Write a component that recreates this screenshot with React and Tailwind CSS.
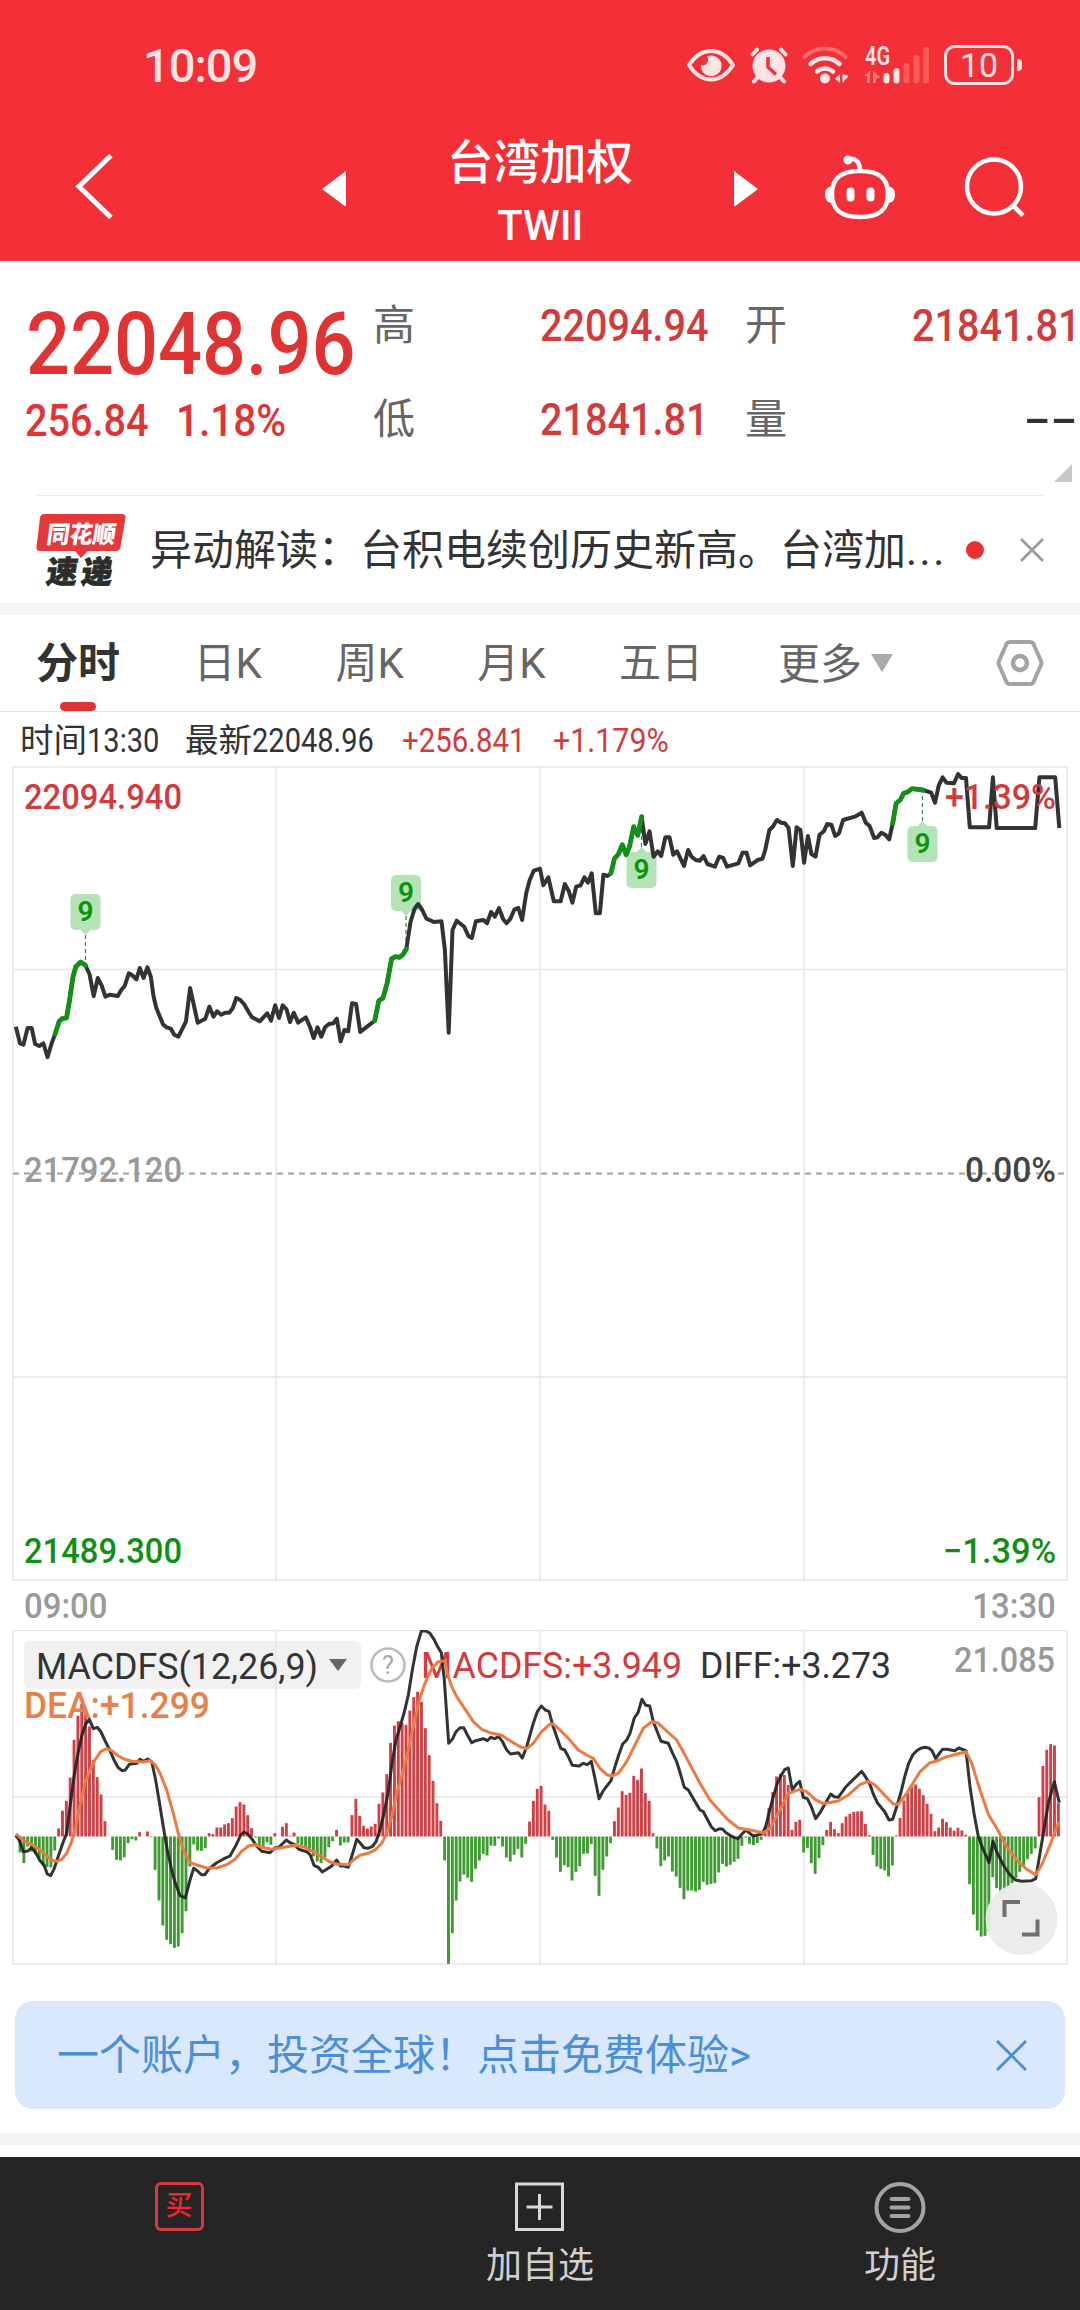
import React from "react";
import clsx from "clsx";

const tabs = ["分时", "日K", "周K", "月K", "五日"];

const quotes = [
  { label: "高", value: "22094.94" },
  { label: "开", value: "21841.81" },
  { label: "低", value: "21841.81" },
  { label: "量", value: null },
];

// price samples, split at the middle of the session
const SAMPLE_X = 2.9037;
const SAMPLE_Y = 3;
const morning = [
  [46, 1280], [58, 1330], [68, 1334], [80, 1284], [92, 1284], [102, 1332], [114, 1338], [126, 1330], [138, 1372], [150, 1330],
  [160, 1302], [172, 1264], [180, 1256], [193, 1254], [202, 1200], [212, 1130], [220, 1100], [234, 1086], [248, 1096],
  [260, 1122], [272, 1188], [284, 1134], [295, 1156], [306, 1190], [318, 1184], [342, 1188], [352, 1170], [362, 1158],
  [374, 1120], [384, 1126], [396, 1138], [406, 1104], [417, 1134], [428, 1102], [438, 1130], [446, 1190], [454, 1225],
  [474, 1274], [484, 1282], [496, 1286], [506, 1304], [518, 1310], [540, 1264], [552, 1164], [564, 1220], [574, 1268],
  [596, 1256], [608, 1220], [620, 1250], [630, 1234], [642, 1244], [654, 1238], [666, 1238], [676, 1224], [686, 1194],
  [698, 1200], [710, 1214], [722, 1236], [732, 1252], [754, 1264], [776, 1240], [787, 1262], [799, 1216], [810, 1254],
  [821, 1216], [832, 1228], [842, 1266], [853, 1238], [866, 1268], [888, 1252], [900, 1280], [911, 1314], [922, 1282],
  [933, 1310], [944, 1282], [955, 1272], [968, 1270], [978, 1256], [989, 1324], [1000, 1290], [1011, 1294], [1022, 1210],
  [1034, 1212], [1046, 1296], [1066, 1280], [1088, 1262], [1100, 1202], [1112, 1194], [1124, 1150], [1137, 1076],
  [1148, 1070], [1160, 1072], [1170, 1064], [1180, 1046], [1192, 966], [1204, 926], [1214, 912], [1226, 930], [1238, 956],
  [1260, 966], [1282, 964], [1292, 1050], [1303, 1298], [1314, 990], [1326, 962], [1348, 980], [1360, 1008], [1370, 1014],
  [1382, 964], [1404, 960], [1414, 970], [1426, 936], [1437, 950], [1449, 924], [1461, 958], [1471, 970], [1482, 956],
  [1494, 928], [1505, 924], [1516, 960], [1528, 880], [1538, 840], [1550, 812], [1562, 808],
];
const afternoon = [
  [0, 806], [10, 856], [24, 832], [40, 904], [60, 904], [72, 852], [83, 872], [94, 908], [105, 860], [118, 856], [129, 832],
  [139, 848], [150, 820], [162, 940], [174, 940], [184, 824], [196, 828], [206, 820], [216, 776], [228, 762], [239, 734],
  [250, 764], [260, 740], [272, 680], [284, 706], [295, 650], [306, 732], [318, 694], [330, 770], [342, 754], [352, 768],
  [364, 712], [376, 712], [387, 764], [398, 754], [418, 798], [430, 750], [440, 770], [452, 780], [464, 782], [475, 768],
  [486, 792], [508, 800], [520, 770], [532, 774], [543, 800], [576, 790], [588, 758], [600, 758], [610, 796], [632, 780],
  [646, 776], [654, 750], [666, 690], [676, 680], [688, 660], [700, 668], [711, 670], [722, 684], [734, 798], [745, 682],
  [756, 690], [767, 788], [778, 708], [788, 762], [800, 770], [812, 704], [824, 694], [834, 672], [846, 674], [857, 708],
  [868, 700], [880, 660], [914, 650], [934, 638], [946, 668], [957, 678], [970, 714], [980, 712], [991, 698], [1002, 704],
  [1014, 718], [1024, 670], [1034, 610], [1046, 600], [1056, 580], [1068, 576], [1080, 566], [1112, 570], [1136, 578],
  [1147, 608], [1158, 556], [1169, 532], [1180, 548], [1202, 550], [1214, 522], [1224, 534], [1237, 534], [1248, 682],
  [1304, 682], [1315, 532], [1326, 684], [1438, 684], [1450, 532], [1496, 532], [1508, 684],
];
const price = [
  ...morning.map(([x, y]) => [x / SAMPLE_X, y / SAMPLE_Y - 166]),
  ...afternoon.map(([x, y]) => [540 + x / SAMPLE_X, y / SAMPLE_Y - 166]),
];

// stretches of nine rising minutes, [from x, to x]
const runs = [
  [55, 86],
  [374, 407],
  [610, 642],
  [892, 924],
];

const markers = [
  { x: 85.5, top: 128, up: false, end: 197 },
  { x: 406, top: 109, up: false, end: 182 },
  { x: 641.5, top: 86, up: true, end: 52 },
  { x: 922.5, top: 60, up: true, end: 25 },
];

// one value per minute
const bars = [
  -4, -48, -80, -30, -45, -52, -64, -88, -92, -93, -42, 24, 77, 107, 177, 290, 362, 398, 385, 330, 230, 178, 126, 46, 0,
  -40, -70, -72, -62, -20, -8, -12, 13, 0, 15, -2, -100, -192, -267, -310, -323, -334, -330, -290, -224, -90, -24, -42,
  -43, -35, 10, 7, 27, 27, 36, 40, 55, 90, 103, 96, 64, 25, -3, -36, -30, -18, -25, 10, 0, 29, 40, 2, 12, -22, -26, -34,
  -45, -60, -75, -80, -62, -32, -14, 20, -27, -18, -18, 64, 113, 62, 32, 24, 30, 38, 98, 132, 187, 281, 333, 346, 340,
  335, 378, 418, 434, 404, 325, 244, 167, 100, 47, -72, -382, -290, -192, -135, -114, -124, -136, -97, -72, -52, -57,
  -27, -28, -6, -30, -63, -75, -55, -37, -63, -22, 45, 107, 143, 152, 96, 77, -10, -63, -106, -86, -92, -132, -106, -89,
  -52, -51, -22, -118, -178, -100, -60, -20, 46, 87, 136, 125, 131, 182, 170, 204, 130, 107, 10, -36, -89, -72, -60,
  -105, -120, -154, -188, -162, -162, -165, -160, -136, -145, -142, -140, -108, -82, -90, -85, -76, -67, -28, -3, -22,
  -26, -20, -10, 30, 85, 133, 180, 188, 185, 155, 20, 44, 50, -48, -34, -80, -112, -65, -26, 20, 44, 22, 10, 40, 60, 68,
  74, 75, 76, 38, 4, -55, -90, -97, -102, -120, -87, 3, 56, 108, 130, 150, 156, 143, 124, 98, 68, 16, 27, 53, 43, 27, 17,
  26, 18, 5, -143, -234, -282, -300, -298, -284, -122, -155, -168, -170, -158, -140, -125, -106, -88, -68, -52, -36, 118,
  212, 260, 277, 273, 100,
];

const diff = [
  [
    [48, 645], [60, 665], [70, 695], [84, 693], [95, 682], [108, 700], [120, 722], [132, 735], [142, 762], [152, 767],
    [163, 745], [176, 705], [190, 665], [200, 640], [210, 560], [222, 470], [234, 400], [246, 345], [257, 312], [268, 298],
    [280, 326], [292, 322], [303, 336], [315, 362], [330, 392], [342, 420], [354, 442], [366, 452], [376, 450], [388, 433],
    [410, 430], [420, 418], [431, 424], [443, 417], [455, 425], [466, 475], [478, 545], [490, 620], [502, 690], [514, 745],
    [526, 790], [540, 826], [556, 834], [570, 780], [581, 745], [592, 752], [604, 764], [615, 764], [627, 746], [650, 728],
    [672, 716], [690, 708], [708, 676], [722, 645], [732, 636], [743, 642], [755, 656], [770, 678], [785, 694], [810, 698],
    [824, 684], [836, 682], [859, 660], [870, 668], [884, 674], [896, 688], [920, 695], [931, 705], [942, 736], [955, 742],
    [967, 756], [980, 748], [995, 738], [1010, 720], [1021, 738], [1033, 738], [1045, 742], [1058, 700], [1070, 658],
  ],
  [
    [0, 668], [12, 683], [24, 685], [36, 680], [48, 665], [60, 630], [72, 580], [84, 520], [96, 430], [108, 360], [120, 320],
    [132, 280], [145, 225], [157, 150], [170, 80], [184, 34], [196, 32], [210, 40], [222, 58], [232, 78], [244, 98],
    [253, 180], [266, 370], [278, 356], [288, 335], [300, 323], [311, 323], [322, 344], [335, 368], [347, 362], [370, 356],
    [382, 362], [392, 352], [404, 356], [416, 350], [427, 364], [440, 390], [452, 402], [475, 398], [487, 414], [500, 380],
    [510, 345], [520, 310], [532, 275], [544, 258], [556, 270], [567, 274], [578, 315], [590, 350], [602, 385], [614, 390],
    [625, 410], [637, 436], [658, 438], [670, 430], [682, 434], [694, 424], [706, 480], [717, 536], [730, 512], [753, 482],
    [765, 440], [776, 405], [788, 372], [800, 360], [810, 340], [823, 294], [834, 278], [846, 238], [857, 256], [869, 258],
    [880, 305], [892, 335], [903, 364], [925, 370], [937, 398], [950, 425], [961, 460], [973, 502], [985, 510], [1008, 550],
    [1020, 570], [1030, 575], [1042, 598], [1054, 620], [1066, 632],
  ],
  [
    [0, 626], [8, 628], [18, 638], [30, 646], [42, 652], [54, 656], [66, 642], [78, 630], [90, 640], [100, 648], [125, 642],
    [136, 625], [148, 575], [160, 530], [172, 490], [184, 465], [195, 448], [205, 444], [217, 510], [228, 494], [239, 484],
    [250, 532], [262, 536], [274, 560], [287, 596], [300, 578], [322, 540], [332, 522], [343, 530], [355, 532], [378, 500],
    [402, 476], [425, 454], [436, 470], [448, 488], [460, 522], [472, 548], [494, 575], [507, 600], [518, 598], [530, 560],
    [542, 520], [554, 470], [566, 430], [578, 405], [590, 392], [602, 385], [615, 382], [626, 384], [636, 392], [647, 416],
    [658, 400], [668, 388], [680, 388], [704, 392], [716, 384], [738, 392], [750, 500], [762, 580], [774, 645], [786, 680],
    [807, 728], [819, 664], [832, 700], [850, 735], [870, 765], [886, 780], [905, 784], [935, 782], [947, 776], [960, 700],
    [975, 610], [985, 550], [1003, 485], [1018, 548],
  ],
];

const dea = [
  [
    [48, 642], [60, 652], [75, 664], [100, 676], [120, 690], [140, 708], [160, 722], [172, 724], [185, 718], [200, 700],
    [215, 665], [228, 615], [240, 555], [255, 490], [270, 450], [285, 420], [302, 395], [320, 386], [335, 392], [355, 408],
    [375, 418], [395, 424], [430, 426], [450, 422], [465, 434], [480, 460], [500, 510], [520, 580], [535, 640], [550, 690],
    [570, 728], [590, 735], [620, 744], [650, 744], [680, 734], [705, 718], [725, 694], [745, 678], [765, 674], [785, 682],
    [815, 688], [840, 684], [885, 676], [915, 682], [940, 695], [965, 710], [990, 726], [1010, 732], [1045, 734], [1060, 720],
  ],
  [
    [0, 706], [24, 700], [48, 688], [65, 670], [80, 640], [95, 590], [110, 520], [130, 450], [145, 390], [160, 320],
    [178, 240], [195, 190], [215, 145], [235, 125], [255, 122], [262, 160], [275, 200], [290, 230], [320, 275], [340, 305],
    [365, 328], [390, 338], [425, 346], [450, 362], [480, 380], [500, 386], [520, 370], [545, 335], [570, 312], [580, 312],
    [600, 330], [625, 355], [655, 390], [680, 405], [700, 415], [720, 445], [740, 464], [755, 468], [775, 460], [800, 425],
    [825, 375], [850, 325], [875, 305], [895, 310], [930, 342], [950, 360], [980, 415], [1020, 490], [1050, 540],
  ],
  [
    [0, 574], [25, 600], [55, 624], [90, 630], [130, 638], [150, 625], [180, 570], [205, 520], [240, 508], [260, 515],
    [285, 538], [310, 551], [355, 543], [385, 525], [420, 494], [445, 484], [465, 495], [500, 532], [520, 552], [535, 553],
    [560, 520], [600, 455], [630, 428], [650, 423], [680, 410], [738, 395], [755, 430], [780, 510], [806, 585], [830, 625],
    [860, 680], [890, 720], [920, 748], [947, 764], [965, 735], [990, 675], [1016, 605],
  ],
];

const toPoints = (list) => list.map(([x, y]) => `${x.toFixed(1)},${y.toFixed(1)}`).join(" ");

const joinParts = (parts) =>
  parts.flatMap((part, i) => part.map(([x, y]) => [i * 360 + x / 3, y / 3 - 10]));

function StatusIcons() {
  return (
    <div className="flex items-center text-[#ffe3e4]">
      <svg className="w-[48px] h-[40px] mr-[14px]" viewBox="0 0 48 40" fill="none">
        <path d="M2 20C9 9 16 6 24 6s15 3 22 14c-7 11-14 14.500-22 14.500S9 31 2 20z" stroke="currentColor" strokeWidth="4" strokeLinejoin="round" />
        <path d="M20 11.500a5.500 5.500 0 0 1-6 8.500A10.300 10.300 0 1 0 20 11.500z" fill="currentColor" />
      </svg>
      <svg className="w-[40px] h-[40px] mr-[13px]" viewBox="0 0 40 40" fill="none">
        <g stroke="currentColor" strokeWidth="4" strokeLinecap="round">
          <path d="M3.500 9.500l4.500-5M36.500 9.500l-4.500-5M9 32l-4 4.500M31 32l4 4.500" />
        </g>
        <circle cx="20" cy="21" r="16.500" fill="currentColor" />
        <path d="M19 12v10l8 7.500" stroke="#f32f38" strokeWidth="3.500" />
      </svg>
      <svg className="w-[48px] h-[40px] mr-[14px]" viewBox="0 0 48 40" fill="none" strokeLinecap="round" strokeWidth="4">
        <path d="M2.500 12a29 29 0 0 1 41 0" stroke="#ff6a68" />
        <path d="M8.500 19a21 21 0 0 1 29 0M15 26.500a12 12 0 0 1 16 0" stroke="currentColor" strokeWidth="4.500" />
        <circle cx="23" cy="33.500" r="5" fill="currentColor" />
        <path d="M38 29v9l-5-4.500zM40.500 29v9l6-7z" fill="currentColor" />
      </svg>
      <svg className="w-[66px] h-[40px] mr-[14px] overflow-visible" viewBox="0 0 66 40">
        <text x="1" y="20" fontSize="25" fontWeight="600" fill="currentColor" textLength="25" lengthAdjust="spacingAndGlyphs">4G</text>
        <path d="M6 26v12h-3v-7H0zM9 26l7 6-4 2v4H9z" fill="#ff7c7c" />
        <rect x="19.500" y="28" width="6" height="10.500" rx="3" fill="currentColor" />
        <rect x="29.500" y="23" width="6" height="15.500" rx="3" fill="currentColor" />
        <rect x="39.500" y="18" width="6" height="20.500" rx="3" fill="#ff5a58" />
        <rect x="49.500" y="10" width="6" height="28.500" rx="3" fill="#ff5a58" />
        <rect x="59" y="2" width="6" height="36.500" rx="3" fill="#ff5a58" />
      </svg>
      <div className="w-[70px] h-[40px] rounded-[11px] border-[3px] border-current flex items-center justify-center text-[34px] leading-none">
        10
      </div>
      <div className="ml-[3px] w-[5px] h-[12px] rounded-r bg-current" />
    </div>
  );
}

function Header() {
  return (
    <header className="h-[261px] bg-[#f32f38] text-white">
      <div className="h-[130px] pl-[143px] pr-[58px] flex items-center justify-between">
        <span className="text-[47px] tracking-[-1px] leading-none font-medium text-[#ffe3e4]">10:09</span>
        <StatusIcons />
      </div>
      <div className="h-[116px] pl-[74px] pr-[53px] flex items-center">
        <svg className="w-[42px] h-[70px]" viewBox="0 0 42 70" fill="none">
          <path d="M37 2.500L5 33.500L37 64.500" stroke="currentColor" strokeWidth="5" />
        </svg>
        <svg className="w-[24px] h-[36px] ml-[206px]" viewBox="0 0 24 36">
          <path d="M24 1v36L0 19z" fill="currentColor" />
        </svg>
        <div className="w-[388px] pt-[12px] flex flex-col items-center">
          <h1 className="text-[46.500px] leading-[62px] font-medium">台湾加权</h1>
          <span className="text-[43px] leading-[62px] font-medium origin-center scale-x-[0.97]">TWII</span>
        </div>
        <svg className="w-[24px] h-[36px]" viewBox="0 0 24 36">
          <path d="M0 1v36L24 19z" fill="currentColor" />
        </svg>
        <svg className="w-[72px] h-[68px] ml-[66px]" viewBox="0 0 72 68" fill="none" stroke="currentColor" strokeWidth="4.500">
          <path d="M24 5c7-1 11.500 2 12 10.500" />
          <circle cx="24" cy="6" r="4.500" fill="currentColor" stroke="none" />
          <path d="M36 17c20 0 28 8 28 23s-8 23-28 23S8 55 8 40s8-23 28-23z" />
          <path d="M8 35c-3 0-4.500 2-4.500 5.500s1.500 6 5 6M64 35c3 0 4.500 2 4.500 5.500s-1.500 6-5 6" strokeWidth="5" />
          <path d="M26.500 37.500v6M46.500 37.500v6" strokeWidth="8" strokeLinecap="round" />
        </svg>
        <svg className="w-[64px] h-[66px] ml-[67px]" viewBox="0 0 64 66" fill="none" stroke="currentColor" strokeWidth="4.500">
          <circle cx="31" cy="31.500" r="27" />
          <path d="M50 50.500l10 10" />
        </svg>
      </div>
    </header>
  );
}

function Quote() {
  return (
    <section className="h-[234px] flex">
      <div className="w-[373px] pl-[26px] pt-[38px] text-[#e03434] font-medium">
        <div className="text-[88px] leading-[90px] h-[90px] origin-left scale-x-[0.88] whitespace-nowrap">22048.96</div>
        <div className="flex text-[45px] leading-[50px] pt-[7px]">
          <span className="w-[151px] -ml-px origin-left scale-x-[0.88]">256.84</span>
          <span className="origin-left scale-x-90">1.18%</span>
        </div>
      </div>
      <div className="flex-1 grid grid-cols-[372px_336px] grid-rows-[94px_94px] content-start pt-[17px]">
        {quotes.map((q, i) => (
          <div key={q.label} className={clsx("flex items-center justify-between", i % 2 === 0 && "pr-[36px]")}>
            <span className="text-[42px] text-[#666]">{q.label}</span>
            {q.value ? (
              <span className="text-[45px] text-[#d23a3c] font-medium origin-right scale-x-[0.88] pt-px">{q.value}</span>
            ) : (
              <span className="text-[45px] text-[#333] font-medium origin-right scale-x-[1.75] mr-[3px]">--</span>
            )}
          </div>
        ))}
        <div className="col-span-2 flex justify-end pr-[9px] -mt-[2px]">
          <svg className="w-[18px] h-[18px]" viewBox="0 0 18 18">
            <path d="M18 0v18H0z" fill="#c8c8c8" />
          </svg>
        </div>
      </div>
    </section>
  );
}

function NewsLogo() {
  return (
    <svg className="w-[90px] h-[74px] overflow-visible" viewBox="0 0 90 74">
      <path d="M8 1h78q4 0 3.500 4l-5 29q-.6 4-5 4H52l-7 7-6-7H4q-4 0-3.500-4L4 5q.6-4 4-4z" fill="#e5393c" />
      <g transform="skewX(-8)" fontWeight="900">
        <text x="14" y="30" fontSize="24" fill="#fff" textLength="69" lengthAdjust="spacingAndGlyphs">同花顺</text>
        <g fill="#2c2c2c" stroke="#2c2c2c" strokeWidth="0.800" fontSize="31">
          <text x="19" y="70">速</text>
          <text x="54" y="70">递</text>
        </g>
      </g>
    </svg>
  );
}

function NewsRow() {
  return (
    <section className="mx-[36px] h-[108px] border-t border-[#ebebeb] flex items-center">
      <NewsLogo />
      <p className="ml-[24px] mt-[2px] w-[802px] text-[42px] leading-none text-[#333] whitespace-nowrap">
        异动解读：台积电续创历史新高。台湾加<span className="tracking-[2.500px]">...</span>
      </p>
      <span className="ml-[14px] size-[18px] rounded-full bg-[#ea2f30]" />
      <svg className="w-[24px] h-[24px] ml-auto" viewBox="0 0 24 24" stroke="#999" strokeWidth="2.500">
        <path d="M1 1l22 22M23 1L1 23" />
      </svg>
    </section>
  );
}

function Tabs() {
  return (
    <nav className="h-[97px] pl-[36px] pr-[35px] border-b border-[#e4e4e4] flex items-center text-[42px] text-[#666]">
      <div className="flex gap-[73.500px] pt-[2px]">
        {tabs.map((tab, i) => (
          <button key={tab} className={clsx("relative leading-[60px]", i === 0 && "font-bold text-[#333]")}>
            {tab}
            {i === 0 && (
              <span className="absolute left-1/2 -translate-x-1/2 top-[68px] w-[36px] h-[9px] rounded-full bg-[#dc3535]" />
            )}
          </button>
        ))}
      </div>
      <button className="ml-[75px] pt-[2px] flex items-center gap-[9px]">
        更多
        <svg className="w-[22px] h-[18px] -mt-[2px]" viewBox="0 0 22 18">
          <path d="M0 0h22L11 18z" fill="#aaa" />
        </svg>
      </button>
      <svg className="w-[50px] h-[48px] ml-auto" viewBox="0 0 50 48" fill="none" stroke="#a3a3a3">
        <path d="M15 3h20q2.500 0 3.500 2l7.500 17q1 2 0 4l-7.500 17q-1 2-3.500 2H15q-2.500 0-3.500-2L4 26q-1-2 0-4l7.500-17q1-2 3.500-2z" strokeWidth="4" />
        <circle cx="25" cy="24" r="7" strokeWidth="4.500" />
      </svg>
    </nav>
  );
}

function InfoRow() {
  return (
    <div className="h-[54px] pl-[20px] pt-[3px] flex items-center text-[33.500px] leading-none text-[#333]">
      <span>时间</span>
      <span className="w-[98px] text-[33px] origin-left scale-x-[0.88]">13:30</span>
      <span>最新</span>
      <span className="w-[150px] text-[33px] origin-left scale-x-[0.88]">22048.96</span>
      <span className="w-[151px] text-[33px] text-[#d23a3c] origin-left scale-x-[0.89]">+256.841</span>
      <span className="text-[33px] text-[#d23a3c] origin-left scale-x-[0.92]">+1.179%</span>
    </div>
  );
}

function Marker({ x, top, up, end }) {
  const tip = up ? top - 5 : top + 41;
  const base = up ? top + 1 : top + 35;
  return (
    <g>
      <line x1={x} x2={x} y1={tip} y2={end} stroke="#3f7f45" strokeWidth="1.200" strokeDasharray="4 3" />
      <rect x={x - 15} y={top} width="30" height="36" rx="5" fill="#b4e3b5" />
      <path d={`M${x - 6} ${base}L${x} ${tip}L${x + 6} ${base}z`} fill="#b4e3b5" />
      <text x={x} y={top + 27} fontSize="28" fontWeight="600" fill="#0d930d" textAnchor="middle">9</text>
    </g>
  );
}

function ChartText({ x, y, width, color, size = 35, weight = 400, children }) {
  return (
    <text x={x} y={y} fontSize={size} fontWeight={weight} fill={color} textLength={width} lengthAdjust="spacingAndGlyphs">
      {children}
    </text>
  );
}

function PriceChart() {
  return (
    <svg className="block w-[1080px] h-[815px]" viewBox="0 0 1080 815" fill="none">
      <g stroke="#e6e6e6" strokeWidth="1.500">
        <rect x="13" y="1" width="1054" height="813" />
        <path d="M276 1v813M540 1v813M804 1v813M13 203.500h1054M13 611h1054" />
      </g>
      <path d="M13 407.500h1054" stroke="#a0a0a0" strokeWidth="2" strokeDasharray="6 5" />
      {markers.map((m) => (
        <Marker key={m.x} {...m} />
      ))}
      <g strokeWidth="4" strokeLinejoin="round">
        <polyline points={toPoints(price)} stroke="#333" />
        {runs.map(([from, to]) => (
          <polyline
            key={from}
            points={toPoints(price.filter(([x]) => x >= from && x <= to))}
            stroke="#12901a"
            strokeWidth="4.800"
            strokeLinecap="round"
          />
        ))}
      </g>
      <ChartText x="24" y="43" width="158" weight={500} color="#d23a3c">22094.940</ChartText>
      <ChartText x="945" y="43" width="111" weight={500} color="#d23a3c">+1.39%</ChartText>
      <ChartText x="24" y="416" width="158" weight={500} color="#999">21792.120</ChartText>
      <ChartText x="965" y="416" width="91" weight={500} color="#444">0.00%</ChartText>
      <ChartText x="24" y="797" width="158" weight={500} color="#0f8f14">21489.300</ChartText>
      <ChartText x="943" y="797" width="113" weight={500} color="#0f8f14">−1.39%</ChartText>
    </svg>
  );
}

function MacdChart() {
  return (
    <svg className="block w-[1080px] h-[336px]" viewBox="0 20 1080 336" fill="none">
      <g transform="translate(0 20)">
        <rect x="24" y="11" width="337" height="48" rx="6" fill="#f1f1f1" />
        <g stroke="#e6e6e6" strokeWidth="1.500">
          <rect x="13" y="0.500" width="1054" height="333.500" />
          <path d="M276 0v334M540 0v334M804 0v334M13 167h1054" />
        </g>
        {bars.map((v, i) => (
          <rect
            key={i}
            x={16.2 + i * 3.86 - 1.5}
            y={v > 0 ? 206.5 - v / 3 : 206.5}
            width="2.900"
            height={Math.abs(v) / 3}
            fill={v > 0 ? "#cf4147" : "#3f9a32"}
          />
        ))}
        <ChartText x="36" y="49" width="282" size={37} color="#333">MACDFS(12,26,9)</ChartText>
        <path d="M329 29h18l-9 12z" fill="#666" />
        <circle cx="388" cy="35" r="16.500" stroke="#bbb" strokeWidth="2.500" />
        <text x="388" y="44" fontSize="25" fill="#aaa" textAnchor="middle">?</text>
        <ChartText x="421" y="48" width="261" size={37} color="#d23a3c">MACDFS:+3.949</ChartText>
        <ChartText x="700" y="48" width="191" size={37} color="#333">DIFF:+3.273</ChartText>
        <ChartText x="954" y="42" width="101" weight={500} color="#999">21.085</ChartText>
        <ChartText x="24" y="88" width="186" size={37} weight={500} color="#e8804a">DEA:+1.299</ChartText>
        <g strokeWidth="3" strokeLinejoin="round">
          <polyline points={toPoints(joinParts(diff))} stroke="#222" strokeOpacity="0.92" />
          <polyline points={toPoints(joinParts(dea))} stroke="#ee7a42" />
        </g>
        <circle cx="1021.500" cy="289" r="36" fill="#ebebeb" fillOpacity="0.93" />
        <path d="M1020 272h-15.500v15M1022 304.500h15.500v-15" stroke="#707070" strokeWidth="4" />
      </g>
    </svg>
  );
}

function Banner() {
  return (
    <div className="mx-[15px] mt-[35px] h-[108px] rounded-[18px] bg-[#d9e8fc] pl-[42px] pr-[38px] flex items-center justify-between text-[#4b8fd8]">
      <span className="text-[42px] leading-none pt-[2px]">一个账户，投资全球！点击免费体验&gt;</span>
      <svg className="w-[31px] h-[31px]" viewBox="0 0 31 31" stroke="currentColor" strokeWidth="3">
        <path d="M1 1l29 29M30 1L1 30" />
      </svg>
    </div>
  );
}

function BottomBar() {
  return (
    <footer className="h-[153px] bg-[#252525] grid grid-cols-3 text-[36px] leading-[50px] text-[#d0d0d0]">
      <div className="flex flex-col items-center pt-[25px]">
        <div className="size-[49px] -ml-[2px] rounded-md border-[3px] border-[#d8393f] flex items-center justify-center text-[27px] leading-none font-medium text-[#f5222f]">
          买
        </div>
      </div>
      <div className="flex flex-col items-center pt-[25px]">
        <svg className="w-[50px] h-[49px]" viewBox="0 0 50 49" fill="none" stroke="#d8d8d8" strokeWidth="3">
          <rect x="1.500" y="2" width="46" height="45.500" />
          <path d="M11.500 25h26M24.500 12v26" />
        </svg>
        <span className="mt-[10px]">加自选</span>
      </div>
      <div className="flex flex-col items-center pt-[25px]">
        <svg className="w-[52px] h-[52px] -mb-[3px]" viewBox="0 0 52 52" fill="none" stroke="#a3a3a3" strokeWidth="4">
          <circle cx="26" cy="25.500" r="23.500" />
          <path d="M17.500 17h17M17.500 25.500h17M17.500 34h17" strokeLinecap="round" />
        </svg>
        <span className="mt-[10px]">功能</span>
      </div>
    </footer>
  );
}

export default function App() {
  return (
    <div lang="zh-CN" className="w-[1080px] h-[2310px] overflow-hidden bg-white font-['Roboto','Noto_Sans_CJK_SC',sans-serif]">
      <Header />
      <Quote />
      <NewsRow />
      <div className="h-[12px] bg-[#f4f4f4]" />
      <Tabs />
      <InfoRow />
      <PriceChart />
      <div className="h-[49px] px-[24px] pt-[2px] flex items-center justify-between text-[35px] leading-none font-medium text-[#999]">
        <span className="origin-left scale-x-[0.94]">09:00</span>
        <span className="origin-right scale-x-[0.94]">13:30</span>
      </div>
      <MacdChart />
      <Banner />
      <div className="mt-[24px] mb-[12px] h-[12px] bg-[#f4f4f4]" />
      <BottomBar />
    </div>
  );
}
